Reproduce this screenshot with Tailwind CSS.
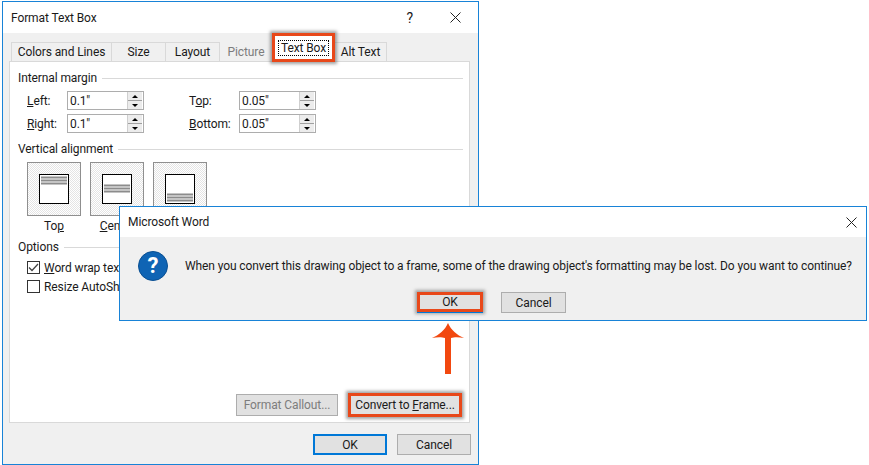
<!DOCTYPE html>
<html lang="en">
<head>
    <meta charset="UTF-8">
    <meta name="viewport" content="width=device-width, initial-scale=1.0">
    <script src="https://cdn.jsdelivr.net/npm/@tailwindcss/browser@4"></script>
    <title>Format Text Box</title>
</head>

<body class="bg-white w-[869px] h-[465px] overflow-hidden relative font-['Roboto','Noto_Sans',sans-serif] text-[12px] leading-[16px] tracking-[-0.1px] text-[#1a1a1a]">

    <!-- back window: Format Text Box -->
    <div class="absolute left-[2px] top-[1px] w-[477px] h-[464px] border border-[#1883d7] bg-[#f0f0f0] flex flex-col">
        <div class="h-[31px] shrink-0 bg-white flex items-center pl-[8px] pr-[17px]">
            <span class="flex-1">Format Text Box</span>
            <span class="text-[14px] mr-[37px]">?</span>
            <svg width="11" height="11" viewBox="0 0 11 11"><path d="M0.5 0.5L10.5 10.5M10.5 0.5L0.5 10.5" stroke="#222" fill="none"/></svg>
        </div>

        <!-- tabs -->
        <div class="h-[28px] shrink-0 flex items-end pl-[8px]">
            <div class="h-[19px] w-[101px] border border-b-0 border-[#d9d9d9] flex items-center justify-center">Colors and Lines</div>
            <div class="h-[19px] w-[54px] border border-b-0 border-l-0 border-[#d9d9d9] flex items-center justify-center">Size</div>
            <div class="h-[19px] w-[54px] border border-b-0 border-l-0 border-[#d9d9d9] flex items-center justify-center">Layout</div>
            <div class="h-[19px] w-[52px] flex items-center justify-center text-[#7d7d7d]">Picture</div>
            <div class="h-[29px] w-[63px] -mb-[1px] relative z-10 bg-white border-[3px] border-[#e8481a] shadow-[0_0_3px_2px_rgba(90,90,90,0.55)] flex items-center justify-center">
                <span class="border border-dotted border-black px-[2px] leading-[14px] whitespace-nowrap">Text Box</span>
            </div>
            <div class="h-[19px] w-[52px] border border-b-0 border-l-0 border-[#d9d9d9] flex items-center justify-center">Alt Text</div>
        </div>

        <!-- panel -->
        <div class="ml-[6px] w-[461px] h-[362px] shrink-0 bg-white border border-[#d9d9d9] flex flex-col pl-[8px] pr-[6px] pt-[8px]">
            <div class="flex items-center gap-[5px]"><span>Internal margin</span><div class="flex-1 h-px bg-[#d9d9d9]"></div></div>

            <div class="grid grid-cols-[162px_1fr] mt-[5px] ml-[9px]">
                <div class="flex flex-col gap-[4px]">
                    <div class="flex items-center h-[19px]">
                        <span class="w-[40px]"><u>L</u>eft:</span>
                        <div class="w-[77px] h-[19px] border border-[#adadad] flex items-center justify-between pl-[2px] pr-[1px]"><span>0.1"</span>
                            <div class="w-[15px] h-[17px] flex flex-col bg-[#ececec] border-l border-[#cfcfcf]"><span class="flex-1 flex items-center justify-center border-b border-[#a0a0a0]"><span class="w-0 h-0 border-x-[3px] border-x-transparent border-b-[3px] border-b-black"></span></span><span class="flex-1 flex items-center justify-center"><span class="w-0 h-0 border-x-[3px] border-x-transparent border-t-[3px] border-t-black"></span></span></div>
                        </div>
                    </div>
                    <div class="flex items-center h-[19px]">
                        <span class="w-[40px]"><u>R</u>ight:</span>
                        <div class="w-[77px] h-[19px] border border-[#adadad] flex items-center justify-between pl-[2px] pr-[1px]"><span>0.1"</span>
                            <div class="w-[15px] h-[17px] flex flex-col bg-[#ececec] border-l border-[#cfcfcf]"><span class="flex-1 flex items-center justify-center border-b border-[#a0a0a0]"><span class="w-0 h-0 border-x-[3px] border-x-transparent border-b-[3px] border-b-black"></span></span><span class="flex-1 flex items-center justify-center"><span class="w-0 h-0 border-x-[3px] border-x-transparent border-t-[3px] border-t-black"></span></span></div>
                        </div>
                    </div>
                </div>
                <div class="flex flex-col gap-[4px]">
                    <div class="flex items-center h-[19px]">
                        <span class="w-[50px]">T<u>o</u>p:</span>
                        <div class="w-[77px] h-[19px] border border-[#adadad] flex items-center justify-between pl-[2px] pr-[1px]"><span>0.05"</span>
                            <div class="w-[15px] h-[17px] flex flex-col bg-[#ececec] border-l border-[#cfcfcf]"><span class="flex-1 flex items-center justify-center border-b border-[#a0a0a0]"><span class="w-0 h-0 border-x-[3px] border-x-transparent border-b-[3px] border-b-black"></span></span><span class="flex-1 flex items-center justify-center"><span class="w-0 h-0 border-x-[3px] border-x-transparent border-t-[3px] border-t-black"></span></span></div>
                        </div>
                    </div>
                    <div class="flex items-center h-[19px]">
                        <span class="w-[50px]"><u>B</u>ottom:</span>
                        <div class="w-[77px] h-[19px] border border-[#adadad] flex items-center justify-between pl-[2px] pr-[1px]"><span>0.05"</span>
                            <div class="w-[15px] h-[17px] flex flex-col bg-[#ececec] border-l border-[#cfcfcf]"><span class="flex-1 flex items-center justify-center border-b border-[#a0a0a0]"><span class="w-0 h-0 border-x-[3px] border-x-transparent border-b-[3px] border-b-black"></span></span><span class="flex-1 flex items-center justify-center"><span class="w-0 h-0 border-x-[3px] border-x-transparent border-t-[3px] border-t-black"></span></span></div>
                        </div>
                    </div>
                </div>
            </div>

            <div class="flex items-center gap-[5px] mt-[8px]"><span>Vertical alignment</span><div class="flex-1 h-px bg-[#d9d9d9]"></div></div>

            <div class="flex gap-[9px] mt-[5px] ml-[9px] items-start h-[73px]">
                <div class="flex flex-col items-center">
                    <div class="w-[54px] h-[54px] border border-[#8f8f8f] bg-[conic-gradient(#e4e4e4_25%,#fff_0_50%,#e4e4e4_0_75%,#fff_0)] bg-[length:2px_2px] flex items-center justify-center">
                        <svg width="30" height="30" viewBox="0 0 30 30"><rect x="0.5" y="0.5" width="29" height="29" fill="#fff" stroke="#000"/><path d="M2 3.5H28M2 6.5H28M2 9.5H28" stroke="#8c8c8c" stroke-width="2"/></svg>
                    </div>
                    <span class="mt-[2px]">To<u>p</u></span>
                </div>
                <div class="flex flex-col items-center">
                    <div class="w-[54px] h-[54px] border border-[#8f8f8f] bg-[conic-gradient(#e4e4e4_25%,#fff_0_50%,#e4e4e4_0_75%,#fff_0)] bg-[length:2px_2px] flex items-center justify-center">
                        <svg width="30" height="30" viewBox="0 0 30 30"><rect x="0.5" y="0.5" width="29" height="29" fill="#fff" stroke="#000"/><path d="M2 11.5H28M2 14.5H28M2 17.5H28" stroke="#8c8c8c" stroke-width="2"/></svg>
                    </div>
                    <span class="mt-[2px]"><u>C</u>enter</span>
                </div>
                <div class="w-[54px] h-[54px] border border-[#8f8f8f] bg-[conic-gradient(#e4e4e4_25%,#fff_0_50%,#e4e4e4_0_75%,#fff_0)] bg-[length:2px_2px] flex items-center justify-center">
                    <svg width="30" height="30" viewBox="0 0 30 30"><rect x="0.5" y="0.5" width="29" height="29" fill="#fff" stroke="#000"/><path d="M2 20.5H28M2 23.5H28M2 26.5H28" stroke="#8c8c8c" stroke-width="2"/></svg>
                </div>
            </div>

            <div class="flex items-center gap-[5px] mt-[4px]"><span>Options</span><div class="flex-1 h-px bg-[#d9d9d9]"></div></div>

            <div class="flex flex-col gap-[6px] mt-[6px] ml-[9px]">
                <div class="flex items-center gap-[4px] h-[13px]">
                    <div class="w-[13px] h-[13px] border border-[#333] flex items-center justify-center"><svg width="11" height="11" viewBox="0 0 11 11"><path d="M1 5.5L4 8.5L10 2" stroke="#444" stroke-width="1.3" fill="none"/></svg></div>
                    <span><u>W</u>ord wrap text in AutoShape</span>
                </div>
                <div class="flex items-center gap-[4px] h-[13px]">
                    <div class="w-[13px] h-[13px] border border-[#333]"></div>
                    <span>Resize AutoShape to fit text</span>
                </div>
            </div>

            <div class="mt-auto mb-[5px] mr-[1px] flex justify-end items-center gap-[10px]">
                <div class="w-[102px] h-[22px] border border-[#adadad] bg-[#e1e1e1] text-[#7d7d7d] flex items-center justify-center">Format Callout...</div>
                <div class="w-[114px] h-[24px] border-[3px] border-[#e8481a] bg-[#e1e1e1] shadow-[0_0_3px_2px_rgba(90,90,90,0.55)] flex items-center justify-center"><span class="whitespace-nowrap">Convert to <u>F</u>rame...</span></div>
            </div>
        </div>

        <div class="flex justify-end gap-[10px] mt-[11px] pr-[7px]">
            <div class="w-[74px] h-[21px] border-2 border-[#0078d7] bg-[#e1e1e1] flex items-center justify-center">OK</div>
            <div class="w-[74px] h-[21px] border border-[#adadad] bg-[#e1e1e1] flex items-center justify-center">Cancel</div>
        </div>
    </div>

    <!-- front window: Microsoft Word -->
    <div class="absolute left-[119px] top-[206px] w-[748px] h-[115px] border border-[#1883d7] bg-[#f0f0f0] flex flex-col">
        <div class="h-[30px] shrink-0 bg-white flex items-center justify-between pl-[8px] pr-[9px]">
            <span>Microsoft Word</span>
            <svg width="11" height="11" viewBox="0 0 11 11"><path d="M0.5 0.5L10.5 10.5M10.5 0.5L0.5 10.5" stroke="#222" fill="none"/></svg>
        </div>
        <div class="flex items-center pl-[18px] pt-[14px]">
            <div class="w-[30px] h-[30px] shrink-0 rounded-full bg-[#0f64b4] border border-[#0a4f92] flex items-center justify-center text-white text-[22px] font-bold leading-none">?</div>
            <span class="ml-[17px] whitespace-nowrap">When you convert this drawing object to a frame, some of the drawing object's formatting may be lost. Do you want to continue?</span>
        </div>
        <div class="flex items-start mt-[11px] pl-[297px]">
            <div class="w-[66px] h-[20px] border-[3px] border-[#e8481a] bg-[#e1e1e1] shadow-[0_1px_0_#0078d7,0_0_3px_2px_rgba(90,90,90,0.5)] flex items-center justify-center">OK</div>
            <div class="w-[65px] h-[21px] ml-[18px] border border-[#adadad] bg-[#e1e1e1] flex items-center justify-center">Cancel</div>
        </div>
    </div>

    <!-- arrow annotation -->
    <svg class="absolute left-[431px] top-[322px]" width="34" height="53" viewBox="0 0 34 53"><path d="M17 1C20 8 26 13 33 16C28 15 23 15 20 16V52H14V16C11 15 6 15 1 16C8 13 14 8 17 1Z" fill="#f2480f"/></svg>
</body>
</html>
